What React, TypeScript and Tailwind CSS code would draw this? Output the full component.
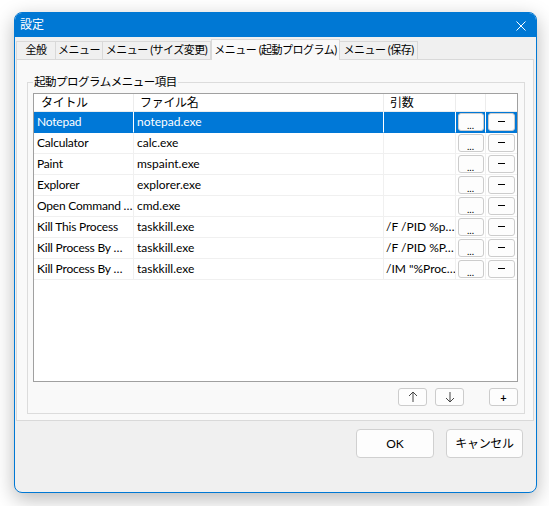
import React from 'react';

type Row = { title: string; file: string; args: string };

const rows: Row[] = [
  { title: 'Notepad', file: 'notepad.exe', args: '' },
  { title: 'Calculator', file: 'calc.exe', args: '' },
  { title: 'Paint', file: 'mspaint.exe', args: '' },
  { title: 'Explorer', file: 'explorer.exe', args: '' },
  { title: 'Open Command …', file: 'cmd.exe', args: '' },
  { title: 'Kill This Process', file: 'taskkill.exe', args: '/F /PID %p…' },
  { title: 'Kill Process By …', file: 'taskkill.exe', args: '/F /PID %P…' },
  { title: 'Kill Process By …', file: 'taskkill.exe', args: '/IM "%Proc…' },
];

const tabs = [
  { label: '全般', w: 'w-[40px]' },
  { label: 'メニュー', w: 'w-[47px]' },
  { label: 'メニュー (サイズ変更)', w: 'w-[108px]' },
  { label: 'メニュー (起動プログラム)', w: 'w-[129px]', active: true },
  { label: 'メニュー (保存)', w: 'w-[78px]' },
];

const SmallButton: React.FC<{ children: React.ReactNode; w: string }> = ({ children, w }) => (
  <button
    type="button"
    className={`${w} h-[18px] flex items-center justify-center rounded-[3px] border border-[#cccccc] bg-[#fdfdfd] text-[12px] leading-none text-black`}
  >
    {children}
  </button>
);

const App: React.FC = () => {
  return (
    <div className="w-[549px] h-[506px] bg-white pt-[12px] pl-[14px] font-['Lato','Noto_Sans_CJK_JP',sans-serif] text-[12px] text-black">
      <div className="w-[523px] h-[481px] flex flex-col rounded-lg border border-[#0078d4] bg-[#f0f0f0] overflow-hidden shadow-[0_6px_20px_rgba(0,0,0,0.28)]">
        {/* title bar */}
        <div className="h-[24px] shrink-0 bg-[#0078d4] flex items-center justify-between pl-[5px] pr-[10px]">
          <span className="text-white text-[12px] leading-none">設定</span>
          <svg width="10" height="10" viewBox="0 0 10 10" className="mt-[1px]">
            <path d="M0.5 0.5 L9.5 9.5 M9.5 0.5 L0.5 9.5" stroke="white" strokeWidth="1" />
          </svg>
        </div>

        {/* tabs */}
        <div className="pt-[2px] pl-[1px] flex items-end h-[22px] shrink-0 text-[11px] tracking-[-0.5px]">
          {tabs.map((t) =>
            t.active ? (
              <div
                key={t.label}
                className={`${t.w} h-[21px] -mb-px relative z-10 border border-b-0 border-[#d9d9d9] bg-[#f9f9f9] flex items-center justify-center whitespace-nowrap`}
              >
                {t.label}
              </div>
            ) : (
              <div
                key={t.label}
                className={`${t.w} h-[18px] border border-b-0 border-l-0 first:border-l border-[#d9d9d9] bg-[#f0f0f0] flex items-center justify-center whitespace-nowrap`}
              >
                {t.label}
              </div>
            )
          )}
        </div>

        {/* panel */}
        <div className="ml-[1px] w-[518px] h-[362px] shrink-0 border border-[#d9d9d9] bg-[#f9f9f9] pt-[22px] pl-[10px]">
          <div className="relative w-[498px] h-[332px] border border-[#dcdcdc] pt-[10px] px-[5px]">
            <span className="absolute left-[5px] -top-[9px] px-[1px] bg-[#f9f9f9] leading-[16px] whitespace-nowrap text-[11.5px] tracking-[-0.5px]">
              起動プログラムメニュー項目
            </span>

            {/* list */}
            <div className="w-[485px] h-[289px] border border-[#a0a0a0] bg-white">
              <div className="grid grid-cols-[100px_250px_72px_30px_31px]">
                {['タイトル', 'ファイル名', '引数', '', ''].map((h, i) => (
                  <div
                    key={i}
                    className={`h-[18px] flex items-center border-b border-[#ececec] tracking-[-0.3px] ${i < 4 ? 'border-r' : ''} ${i === 0 ? 'pl-[7px]' : 'pl-[6px]'}`}
                  >
                    {h}
                  </div>
                ))}
                {rows.map((r, idx) => {
                  const sel = idx === 0;
                  const cell = sel
                    ? 'bg-[#0078d7] text-white border-r border-r-white border-b border-b-[#0078d7]'
                    : 'border-r border-b border-[#f0f0f0]';
                  return (
                    <React.Fragment key={idx}>
                      <div className={`h-[21px] flex items-center pl-[3px] whitespace-nowrap overflow-hidden tracking-[-0.2px] ${cell}`}>{r.title}</div>
                      <div className={`h-[21px] flex items-center pl-[3px] whitespace-nowrap overflow-hidden ${cell}`}>{r.file}</div>
                      <div className={`h-[21px] flex items-center pl-[2px] whitespace-nowrap overflow-hidden ${cell}`}>{r.args}</div>
                      <div className={`h-[21px] flex items-center justify-center ${cell}`}>
                        <SmallButton w="w-[26px]">
                          <span className="mt-[5px] text-[10px]">...</span>
                        </SmallButton>
                      </div>
                      <div
                        className={`h-[21px] flex items-center justify-center ${
                          sel ? 'bg-[#0078d7] border-b border-b-[#0078d7]' : 'border-b border-[#f0f0f0]'
                        }`}
                      >
                        <SmallButton w="w-[27px]">
                          <span className="block w-[7px] h-px bg-black -mt-[2px]" />
                        </SmallButton>
                      </div>
                    </React.Fragment>
                  );
                })}
              </div>
            </div>

            {/* list buttons */}
            <div className="mt-[6px] w-[485px] flex justify-end">
              <SmallButton w="w-[29px]">
                <svg width="10" height="12" viewBox="0 0 10 12">
                  <path d="M5 1 V11 M1 5 L5 1 L9 5" stroke="#444" strokeWidth="1" fill="none" />
                </svg>
              </SmallButton>
              <div className="ml-[8px]">
                <SmallButton w="w-[29px]">
                  <svg width="10" height="12" viewBox="0 0 10 12">
                    <path d="M5 1 V11 M1 7 L5 11 L9 7" stroke="#444" strokeWidth="1" fill="none" />
                  </svg>
                </SmallButton>
              </div>
              <div className="ml-[25px]">
                <SmallButton w="w-[29px]">
                  <span className="text-[11px] font-bold leading-none">+</span>
                </SmallButton>
              </div>
            </div>
          </div>
        </div>

        {/* dialog buttons */}
        <div className="flex justify-end gap-[12px] pt-[8px] pr-[13px]">
          <button
            type="button"
            className="w-[78px] h-[29px] rounded-[4px] border border-[#d0d0d0] bg-[#fdfdfd] text-[12px]"
          >
            OK
          </button>
          <button
            type="button"
            className="w-[77px] h-[29px] rounded-[4px] border border-[#d0d0d0] bg-[#fdfdfd] text-[12px] tracking-[-0.3px]"
          >
            キャンセル
          </button>
        </div>
      </div>
    </div>
  );
};

export default App;
